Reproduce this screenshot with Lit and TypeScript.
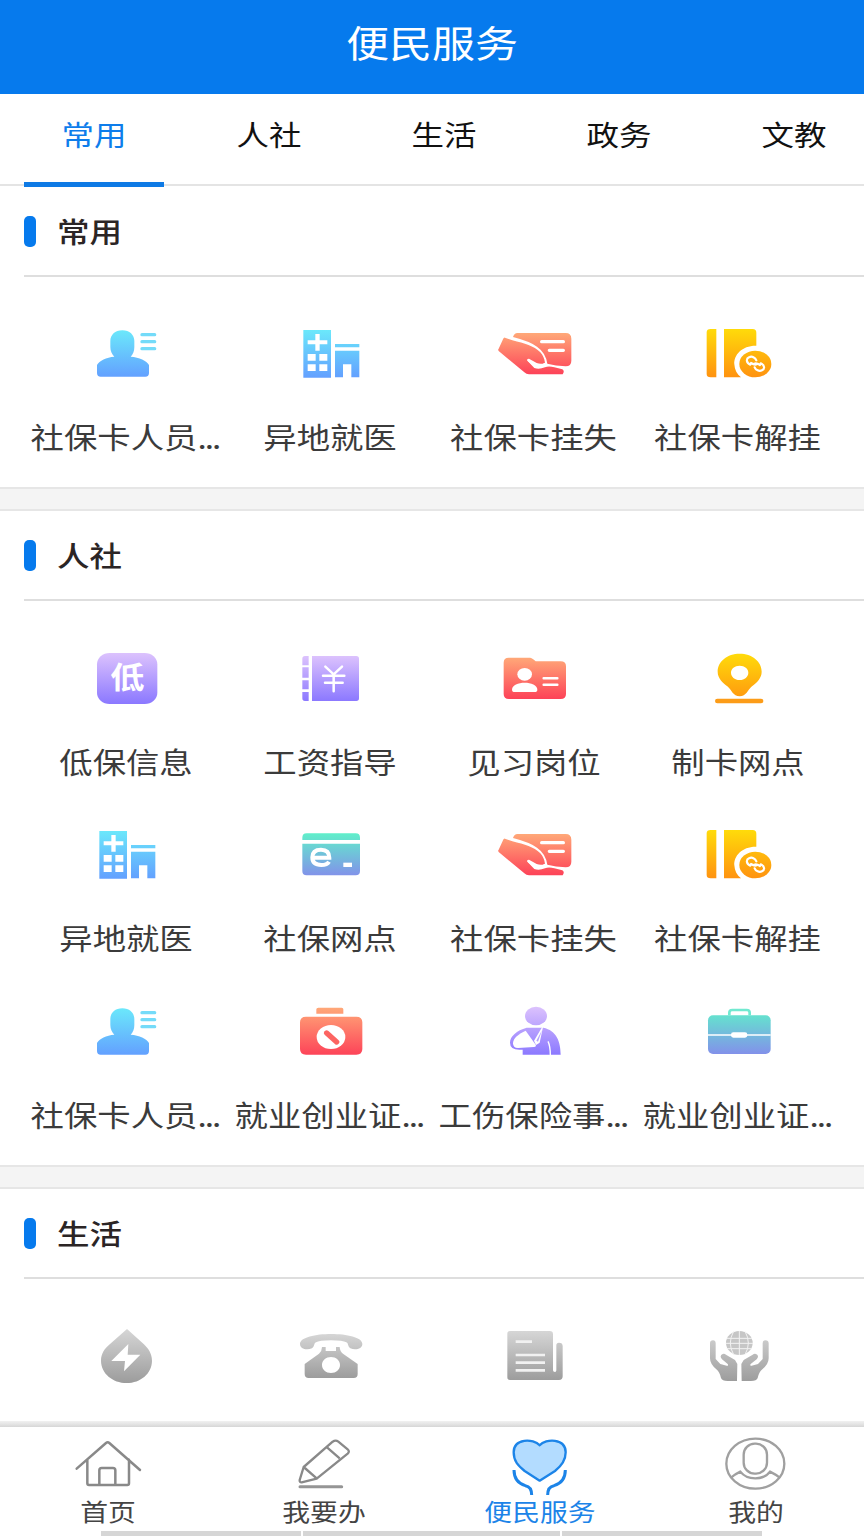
import { LitElement, html, css, svg } from "lit";
import { customElement, property } from "lit/decorators.js";

type Stops = [string, string];
const CYAN: Stops = ["#6be8fb", "#63a0ff"];
const RED: Stops = ["#ffa878", "#fd4258"];
const GOLD: Stops = ["#ffdb0a", "#ff9210"];
const VIOLET: Stops = ["#dcc2fd", "#8b78ff"];
const TEAL: Stops = ["#60efca", "#8291ea"];
const GREY: Stops = ["#d6d6d6", "#9c9c9c"];

interface Icon { box: string; y: [number, number]; colors: Stops; art: unknown; }

const F = "url(#g)";

const ICONS: Record<string, Icon> = {
  person: {
    box: "3 33 270 192", y: [58, 198], colors: CYAN,
    art: svg`<path fill=${F} d="M127 58c22 0 36 14 36 32v18c0 13-4 22-11 29 26 2 48 12 55 25v24q0 11-11 11H62q-11 0-11-11v-24c7-13 28-23 52-25-7-7-12-16-12-29V90c0-18 14-32 36-32Z"/>
      <path stroke="#74dbf9" stroke-width="10" stroke-linecap="round" d="M186 71h38M186 92h38M186 113h38"/>`,
  },
  hospital: {
    box: "615 33 270 192", y: [57, 200], colors: CYAN,
    art: svg`<path fill=${F} fill-rule="evenodd" d="M670 57h83v143h-83ZM706 69v19h-23v12h23v19h13v-19h23V88h-23V69ZM683 129v20h24v-20ZM718 129v20h24v-20ZM683 160v20h24v-20ZM718 160v20h24v-20Z"/>
      <path fill=${F} d="M765 99h73v10h-73ZM765 119h73v80h-24v-39h-25v39h-24Z"/>`,
  },
  handcard: {
    box: "27 33 270 192", y: [66, 190], colors: RED,
    art: svg`<path fill=${F} d="M112 66h145q17 0 17 17v66q0 17-17 17-30-1-55-8-5-33-31-51-22-16-72-29 4-12 13-12Z"/>
      <path fill=${F} d="M75 80l22 8c38 10 64 16 84 36 8 9 12 18 14 31-8 5-17 4-25 1l-23-13q-8 0-4 7l20 21q14 5 32-2c8-4 18-3 28 0l24 6q8 4 1 15H147q-8 0-14-6L56 120q-3-4 0-7l13-28q2-6 6-5Z"/>
      <path d="M145 148l19 16q18 4 33-6" fill="none" stroke="#fff" stroke-width="6" stroke-linecap="round"/>
      <path stroke="#fff" stroke-width="10" stroke-linecap="round" d="M185 92h65M208 118h42"/>`,
  },
  bookchain: {
    box: "639 33 270 192", y: [54, 200], colors: GOLD,
    art: svg`<path fill=${F} d="M692 54h17v145h-17q-12 0-12-10V64q0-10 12-10ZM732 54h86q11 0 11 11v39c-42-1-68 27-66 56 1 17 8 30 20 39h-51Z"/>
      <ellipse cx="826" cy="159" rx="48" ry="40" fill=${F}/>
      <path d="M811 161c-13-6-13-18-4-22 9-5 19 1 22 9M842 157c13 6 13 17 4 21-9 4-19-1-22-9M813 156c6 4 12 6 17 4M840 162c-6-4-12-6-17-4" fill="none" stroke="#fff" stroke-width="6.5" stroke-linecap="round"/>`,
  },
  di: {
    box: "3 33 270 192", y: [51, 204], colors: VIOLET,
    art: svg`<rect x="51" y="51" width="181" height="153" rx="38" ry="34" fill=${F}/>
      <text transform="translate(142 157) scale(1.14 1)" text-anchor="middle" font-size="90" font-weight="700" fill="#fff">低</text>`,
  },
  wage: {
    box: "615 33 270 192", y: [60, 196], colors: VIOLET,
    art: svg`<path fill=${F} d="M696 60h133q8 0 8 8v119q0 8-8 8H696ZM675 60h11v28h-19V68q0-8 8-8ZM667 94h19v31h-19ZM667 133h19v27h-19ZM667 168h19v27h-11q-8 0-8-8Z"/>
      <path d="M736 92l25 23 25-23M729 119h64M735 140h53M761 117v49" fill="none" stroke="#fff" stroke-width="7.5" stroke-linecap="round"/>`,
  },
  folder: {
    box: "27 33 270 192", y: [65, 189], colors: RED,
    art: svg`<path fill=${F} d="M86 65h64q6 0 17 11h75q16 0 16 15v83q0 15-16 15H87q-16 0-16-15V80q0-15 15-15Z"/>
      <ellipse cx="134" cy="115" rx="22" ry="19" fill="#fff"/><path fill="#fff" d="M96 161c0-28 76-28 76 0q0 7-8 7h-60q-8 0-8-7Z"/>
      <path stroke="#fff" stroke-width="7.5" stroke-linecap="round" d="M191 127h41M191 146h41"/>`,
  },
  pin: {
    box: "639 33 270 192", y: [53, 202], colors: GOLD,
    art: svg`<path fill=${F} fill-rule="evenodd" d="M779 53c37 0 66 23 66 54 0 20-15 33-29 44-13 11-17 30-37 30s-24-19-37-30c-14-11-29-24-29-44 0-31 29-54 66-54ZM779 89c-15 0-26 9-26 21s11 22 26 22 26-10 26-22-11-21-26-21Z"/>
      <rect x="705" y="188" width="145" height="14" rx="7" fill="#fc9c18"/>`,
  },
  ecard: {
    box: "15 22 270 192", y: [53, 181], colors: TEAL,
    art: svg`<path fill=${F} d="M80 53h147q13 0 13 13v7H67v-7q0-13 13-13ZM67 84h173v82q0 13-13 13H80q-13 0-13-13Z"/>
      <path d="M97 126h51q0-24-25-24-26 0-26 23 0 23 27 23 17 0 23-10" fill="none" stroke="#fff" stroke-width="12"/>
      <rect x="190" y="141" width="26" height="13" fill="#fff"/>`,
  },
  medkit: {
    box: "15 28 270 192", y: [51, 194], colors: RED,
    art: svg`<path fill=${F} d="M115 51h70q5 0 5 5v13h-81V56q0-5 6-5ZM78 78h151q18 0 18 17v80q0 17-18 17H78q-18 0-18-17V95q0-17 18-17Z"/>
      <ellipse cx="153" cy="139" rx="43" ry="36" fill="#fff"/><path d="M140 127l30 27" stroke="#fc6461" stroke-width="16" stroke-linecap="round"/>`,
  },
  injury: {
    box: "27 28 270 192", y: [48, 194], colors: VIOLET,
    art: svg`<ellipse cx="168" cy="76" rx="33" ry="28" fill=${F}/>
      <path fill=${F} d="M140 111c-30 8-50 26-50 45q0 21 28 21h10v15h114c0-40-13-73-52-81Z"/>
      <path fill="#fff" d="M137 120l30 42q3 6-5 7l-48 3q-15 0-15-14c0-16 18-29 38-38Z"/>
      <path fill="#fff" d="M187 108l-25 42 6 13 11-7 10-47Z"/>
      <path fill="#b4a3fe" d="M186 119l-17 31 5 3Z"/>
      <path d="M204 152q7 14 7 42" fill="none" stroke="#fff" stroke-width="4"/>`,
  },
  briefcase: {
    box: "639 28 270 192", y: [54, 190], colors: TEAL,
    art: svg`<path d="M748 74V66q0-8 9-8h43q9 0 9 8v8" stroke="#71e9d0" stroke-width="8" fill="none"/>
      <rect x="684" y="74" width="188" height="116" rx="15" fill=${F}/>
      <path d="M684 133h188" stroke="#fff" stroke-width="4"/><rect x="753" y="125" width="49" height="16" rx="7" fill="#fff"/>`,
  },
  drop: {
    box: "3 42 270 192", y: [54, 216], colors: GREY,
    art: svg`<path fill=${F} d="M141 54l50 45c14 13 25 29 25 50 0 38-34 67-76 67s-77-29-77-67c0-21 11-37 27-50Z"/>
      <path fill="#fff" d="M145 99l-2 32h38l-49 50 3-31H94Z"/>`,
  },
  phone: {
    box: "615 42 270 192", y: [68, 202], colors: GREY,
    art: svg`<path fill=${F} d="M660 99c0-40 187-40 187 0 0 15-21 20-36 13-8-5-5-15-12-18q-10-6-46-6t-45 6c-7 3-4 13-12 18-16 7-36 2-36-13Z"/>
      <path fill=${F} fill-rule="evenodd" d="M726 108h11v12h31v-12h11q1 14 10 20l44 31v30q0 12-12 12H686q-12 0-12-12v-30l43-31q9-8 9-20ZM753 138c-15 0-27 10-27 24s12 24 27 24 27-10 27-24-12-24-27-24Z"/>`,
  },
  news: {
    box: "27 42 270 192", y: [60, 208], colors: GREY,
    art: svg`<path fill=${F} d="M90 60h119q10 0 10 10v108q0 5 6 5 4 0 4-5v-75q0-8 8-8 11 0 11 10v91q0 11-11 11H90q-8 0-8-8V68q0-8 8-8Z"/>
      <path stroke="#f1f1f1" stroke-width="8" d="M107 92h49M107 132h88M107 155h88M107 178h88"/>`,
  },
  globe: {
    box: "639 42 270 192", y: [56, 212], colors: GREY,
    art: svg`<ellipse cx="778" cy="96" rx="40" ry="36" fill="#c6c6c6"/>
      <path d="M740 82h76M737 97h82M740 113h76M778 60v72M761 61q-20 35 0 70M795 61q20 35 0 70" stroke="#f2f2f2" stroke-width="3" fill="none"/>
      <path fill=${F} d="M699 88q8 0 8 9v47l14 15 22 6 1-5-18-15q-9-11 2-16 5-2 10 2l27 16 7 12-1 51h-28q-17 0-20-9-4-18-14-26-19-16-19-33V97q0-9 9-9ZM856 88q-8 0-8 9v47l-14 15-22 6-1-5 19-15q9-11-2-16-5-2-10 2l-27 16-7 12 1 51h28q17 0 20-9 4-18 14-26 19-16 19-33V97q0-9-10-9Z"/>`,
  },
  home: {
    box: "189 66 270 192", y: [90, 230], colors: GREY,
    art: svg`<path d="M230 176l88-77q5-4 10 0l92 81M262 149v71q0 5 5 5h115q5 0 5-5v-71M298 223v-42q0-7 7-7h34q7 0 7 7v42" fill="none" stroke="#898989" stroke-width="7.5" stroke-linecap="round"/>`,
  },
  pencil: {
    box: "837 66 270 192", y: [90, 235], colors: GREY,
    art: svg`<path d="M911 171l87-76q9-6 17 0l28 23q7 6 0 13l-93 75-45 11q-7 0-6-7ZM911 171l39 34M981 112l38 33" fill="none" stroke="#898989" stroke-width="7" stroke-linejoin="round"/>
      <path d="M900 230h125" stroke="#959595" stroke-width="9" stroke-linecap="round"/>`,
  },
  heart: {
    box: "189 66 270 192", y: [85, 255], colors: CYAN,
    art: svg`<path d="M323 106c-19-21-78-22-78 21 0 27 14 41 33 56l45 29 46-29c18-14 32-29 32-56 0-43-60-42-78-21Z" fill="#b3dcff" stroke="#1c84e8" stroke-width="7" stroke-linejoin="round"/>
      <path d="M246 180c0 23 11 40 34 47q19 3 19 28M400 180c0 23-11 40-34 47q-19 3-19 28" fill="none" stroke="#1c84e8" stroke-width="9"/>`,
  },
  me: {
    box: "837 66 270 192", y: [85, 237], colors: GREY,
    art: svg`<g fill="none" stroke="#a0a0a0" stroke-width="7"><ellipse cx="970" cy="161" rx="87" ry="75"/>
      <rect x="935" y="101" width="70" height="90" rx="33"/>
      <path d="M898 202q9-8 27-17 15 20 45 20t44-20q18 9 29 18"/></g>`,
  },
};

@customElement("line-icon")
class LineIcon extends LitElement {
  @property() name = "";
  static styles = css`
    :host { display: block; width: 90px; height: 64px; flex: none; }
    .art { display: block; width: 100%; height: 100%; font-family: "Noto Sans CJK SC", sans-serif; }
  `;
  render() {
    const i = ICONS[this.name];
    return html`<svg class="art" viewBox=${i.box} fill="none">
      <defs><linearGradient id="g" gradientUnits="userSpaceOnUse" x1="0" x2="0" y1=${i.y[0]} y2=${i.y[1]}>
        <stop offset="0" stop-color=${i.colors[0]}></stop><stop offset="1" stop-color=${i.colors[1]}></stop>
      </linearGradient></defs>${i.art}</svg>`;
  }
}

const TABS = ["常用", "人社", "生活", "政务", "文教"];
const SECTIONS: { title: string; items: [string, string][] }[] = [
  { title: "常用", items: [["person", "社保卡人员..."], ["hospital", "异地就医"], ["handcard", "社保卡挂失"], ["bookchain", "社保卡解挂"]] },
  {
    title: "人社", items: [
      ["di", "低保信息"], ["wage", "工资指导"], ["folder", "见习岗位"], ["pin", "制卡网点"],
      ["hospital", "异地就医"], ["ecard", "社保网点"], ["handcard", "社保卡挂失"], ["bookchain", "社保卡解挂"],
      ["person", "社保卡人员..."], ["medkit", "就业创业证..."], ["injury", "工伤保险事..."], ["briefcase", "就业创业证..."],
    ],
  },
  { title: "生活", items: [["drop", ""], ["phone", ""], ["news", ""], ["globe", ""]] },
];
const NAV = [["home", "首页"], ["pencil", "我要办"], ["heart", "便民服务"], ["me", "我的"]];

const labelText = (label: string) =>
  label.endsWith("...") ? html`${label.slice(0, -3)}<span class="dots">...</span>` : label;

@customElement("app-root")
class AppRoot extends LitElement {
  static styles = css`
    :host {
      display: flex; flex-direction: column; width: 864px; height: 1536px; overflow: hidden;
      background: #fff; color: #333; font-family: "Noto Sans CJK SC", sans-serif;
    }
    .wide { display: inline-block; white-space: nowrap; transform: scaleX(1.16); }
    .top {
      flex: none; height: 94px; box-sizing: border-box; padding-bottom: 11px; background: #067aed; color: #fff;
      display: flex; align-items: center; justify-content: center; font-size: 37px; line-height: 54px;
    }
    .tabs {
      flex: none; display: flex; justify-content: space-between; height: 93px; padding-left: 24px;
      background: linear-gradient(#e4e4e4, #e4e4e4) 0 90px / 100% 2px no-repeat;
    }
    .tab {
      width: 140px; box-sizing: border-box; padding-top: 19px; text-align: center;
      font-size: 28px; line-height: 42px; color: #111; border-bottom: 5px solid transparent;
    }
    .tab.on { color: #0e7deb; border-color: #0e7ae5; }
    .main { flex: 1; min-height: 0; overflow: hidden; }
    .section + .section { border-top: 24px solid #f4f4f4; position: relative; }
    .section + .section::before {
      content: ""; position: absolute; left: 0; right: 0; top: -24px; height: 20px;
      border-top: 2px solid #e6e6e6; border-bottom: 2px solid #e6e6e6;
    }
    .head {
      display: flex; align-items: center; gap: 21px; height: 88px; margin-left: 24px;
      border-bottom: 2px solid #dedede; font-size: 28px; font-weight: 500; color: #2b2525;
    }
    .mark { width: 12px; height: 31px; border-radius: 5px; background: #067aed; }
    .head .wide { transform-origin: left; margin-top: -1px; }
    .grid {
      display: grid; grid-template-columns: repeat(4, 204px); row-gap: 38.7px;
      padding: 44.5px 24px 27.5px;
    }
    .section + .section .grid { padding: 45.5px 24px 27.5px; }
    .cell { display: flex; flex-direction: column; align-items: center; gap: 29px; }
    .label { font-size: 29px; line-height: 42px; height: 45px; color: #3b3b3b; transform: scaleX(1.15); }
    .dots { letter-spacing: -1.7px; margin-right: 1px; }
    .nav {
      flex: none; height: 115px; box-sizing: border-box; display: flex; flex-direction: column;
      padding-top: 6px;
      background: linear-gradient(#f1f1f1, #e2e2e2 60%, #d6d6d6) 0 0 / 100% 6px no-repeat;
    }
    .navrow { flex: 1; display: grid; grid-template-columns: repeat(4, 1fr); padding-top: 5px; }
    .item { display: flex; flex-direction: column; align-items: center; color: #444; font-size: 24px; line-height: 29px; }
    .item.on { color: #1c84e8; }
    .strips { display: flex; gap: 2px; height: 5px; margin: 0 101px; }
    .strip { background: #d6d6d6; width: 200px; }
    .strip.mid { width: 257px; }
  `;
  render() {
    return html`
      <header class="top"><span class="wide">便民服务</span></header>
      <nav class="tabs">${TABS.map((t, i) => html`<div class="tab ${i ? "" : "on"}"><span class="wide">${t}</span></div>`)}</nav>
      <main class="main">${SECTIONS.map(s => html`
        <section class="section">
          <div class="head"><span class="mark"></span><span class="wide">${s.title}</span></div>
          <div class="grid">${s.items.map(([icon, label]) => html`
            <div class="cell"><line-icon name=${icon}></line-icon><span class="wide label">${labelText(label)}</span></div>`)}</div>
        </section>`)}</main>
      <footer class="nav">
        <div class="navrow">${NAV.map(([icon, label]) => html`
          <div class="item ${icon === "heart" ? "on" : ""}"><line-icon name=${icon}></line-icon><span class="wide">${label}</span></div>`)}</div>
        <div class="strips"><i class="strip"></i><i class="strip mid"></i><i class="strip"></i></div>
      </footer>`;
  }
}
